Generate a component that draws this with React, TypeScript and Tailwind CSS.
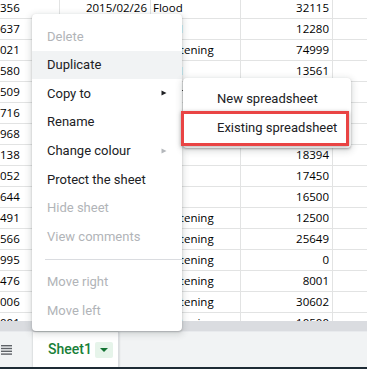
import React from "react";

type Row = { a: string; b?: string; c?: string; d: string };

const rows: Row[] = [
  { a: "356", b: "2015/02/26", c: "Flood", d: "32115" },
  { a: "637", b: "2015/03/02", c: "Flood", d: "12280" },
  { a: "021", b: "2015/03/11", c: "Frightening", d: "74999" },
  { a: "580", b: "2015/03/19", c: "Flood", d: "13561" },
  { a: "509", b: "2015/04/01", c: "Storm", d: "21400" },
  { a: "716", b: "2015/04/08", c: "Storm", d: "15020" },
  { a: "968", b: "2015/04/15", c: "Flood", d: "11802" },
  { a: "138", b: "2015/04/22", c: "Fire", d: "18394" },
  { a: "052", b: "2015/05/01", c: "Fire", d: "17450" },
  { a: "644", b: "2015/05/09", c: "Fire", d: "16500" },
  { a: "491", b: "2015/05/16", c: "Frightening", d: "12500" },
  { a: "566", b: "2015/05/23", c: "Frightening", d: "25649" },
  { a: "995", b: "2015/06/02", c: "Frightening", d: "0" },
  { a: "476", b: "2015/06/10", c: "Frightening", d: "8001" },
  { a: "006", b: "2015/06/18", c: "Frightening", d: "30602" },
  { a: "001", b: "2015/06/25", c: "Frightening", d: "10500" },
];

const cell = "h-full border-r border-[#e2e3e3] overflow-hidden whitespace-nowrap flex items-center";

function Arrow({ color }: { color: string }) {
  return (
    <svg width="6" height="6" viewBox="0 0 6 6" className="ml-auto mr-[15px]">
      <polygon points="0.5,0.5 5.5,3 0.5,5.5" fill={color} />
    </svg>
  );
}

const menuItems: { label: string; disabled?: boolean; active?: boolean; arrow?: string }[] = [
  { label: "Delete", disabled: true },
  { label: "Duplicate", active: true },
  { label: "Copy to", arrow: "#202124" },
  { label: "Rename" },
  { label: "Change colour", arrow: "#b4b7bb" },
  { label: "Protect the sheet" },
  { label: "Hide sheet", disabled: true },
  { label: "View comments", disabled: true },
];

export default function App() {
  return (
    <div className="relative w-[367px] h-[369px] overflow-hidden bg-white flex flex-col">
      {/* grid */}
      <div className="h-[321px] overflow-hidden text-[11.5px] text-[#000]" style={{ fontFamily: '"Open Sans", sans-serif' }}>
        <div className="-mt-[2px] flex flex-col">
          {rows.map((r, i) => (
            <div key={i} className="flex h-[21px] border-b border-[#e2e3e3] shrink-0">
              <div className={`${cell} w-[60px]`}>{r.a}</div>
              <div className={`${cell} w-[91px] justify-end pr-[3px]`}>{r.b}</div>
              <div className={`${cell} w-[90px] pl-[2px]`}>{r.c}</div>
              <div className={`${cell} w-[92px] justify-end pr-[3px]`}>{r.d}</div>
              <div className={`${cell} flex-1 border-r-0`}></div>
            </div>
          ))}
        </div>
      </div>

      {/* scrollbar */}
      <div className="h-[10px] bg-[#dadce0] shrink-0" />
      <div className="h-[1px] bg-[#e8eaed] shrink-0" />

      {/* sheet tabs bar */}
      <div className="h-[35px] bg-[#f1f3f4] flex items-stretch shrink-0" style={{ fontFamily: "Roboto, sans-serif" }}>
        <div className="w-[33px] flex items-center pl-[1px]">
          <svg width="12" height="12" viewBox="0 0 12 12">
            <rect x="0" y="1" width="11" height="1.4" fill="#5f6368" />
            <rect x="0" y="3.8" width="11" height="1.4" fill="#5f6368" />
            <rect x="0" y="6.6" width="11" height="1.4" fill="#5f6368" />
            <rect x="0" y="9.4" width="11" height="1.4" fill="#5f6368" />
          </svg>
        </div>
        <div className="w-[86px] bg-white flex items-center pl-[15px] shadow-[0_0_2px_rgba(60,64,67,0.3)] border-r border-[#dadce0]">
          <span className="text-[14px] font-medium text-[#188038]">Sheet1</span>
          <span className="ml-[3px] w-[18px] h-[16px] bg-[#e6f4ea] rounded-[2px] flex items-center justify-center">
            <svg width="8" height="4" viewBox="0 0 8 4">
              <polygon points="0,0 8,0 4,4" fill="#137333" />
            </svg>
          </span>
        </div>
      </div>
      <div className="h-[2px] bg-[#1e2b35] shrink-0" />

      {/* context menu */}
      <div
        className="absolute left-[32px] top-[14px] w-[150px] bg-white rounded-[4px] shadow-[0_2px_6px_2px_rgba(60,64,67,0.15),0_1px_2px_rgba(60,64,67,0.3)] pt-[8px] pb-[6px] text-[13px]"
        style={{ fontFamily: "Roboto, sans-serif" }}
      >
        {menuItems.map((m) => (
          <div
            key={m.label}
            className={`h-[28.6px] flex items-center pl-[15px] ${m.active ? "bg-[#f1f3f4]" : ""} ${m.disabled ? "text-[#b1b4b8]" : "text-[#202124]"}`}
          >
            {m.label}
            {m.arrow && <Arrow color={m.arrow} />}
          </div>
        ))}
        <div className="my-[8px] ml-[13px] h-px bg-[#dadce0]" />
        {["Move right", "Move left"].map((l) => (
          <div key={l} className="h-[28.6px] flex items-center pl-[15px] text-[#b1b4b8]">
            {l}
          </div>
        ))}
      </div>

      {/* submenu */}
      <div
        className="absolute left-[183px] top-[78px] w-[168px] bg-white rounded-[4px] shadow-[0_2px_6px_2px_rgba(60,64,67,0.15),0_1px_2px_rgba(60,64,67,0.3)] py-[6px] text-[13px] text-[#202124]"
        style={{ fontFamily: "Roboto, sans-serif" }}
      >
        <div className="h-[29px] flex items-center pl-[34px]">New spreadsheet</div>
        <div className="h-[29px] flex items-center pl-[34px]">Existing spreadsheet</div>
      </div>

      {/* highlight box */}
      <div className="absolute left-[181px] top-[111px] w-[168px] h-[35px] border-[3px] border-[#e94444] shadow-[0_1px_4px_rgba(0,0,0,0.3)]" />
    </div>
  );
}
